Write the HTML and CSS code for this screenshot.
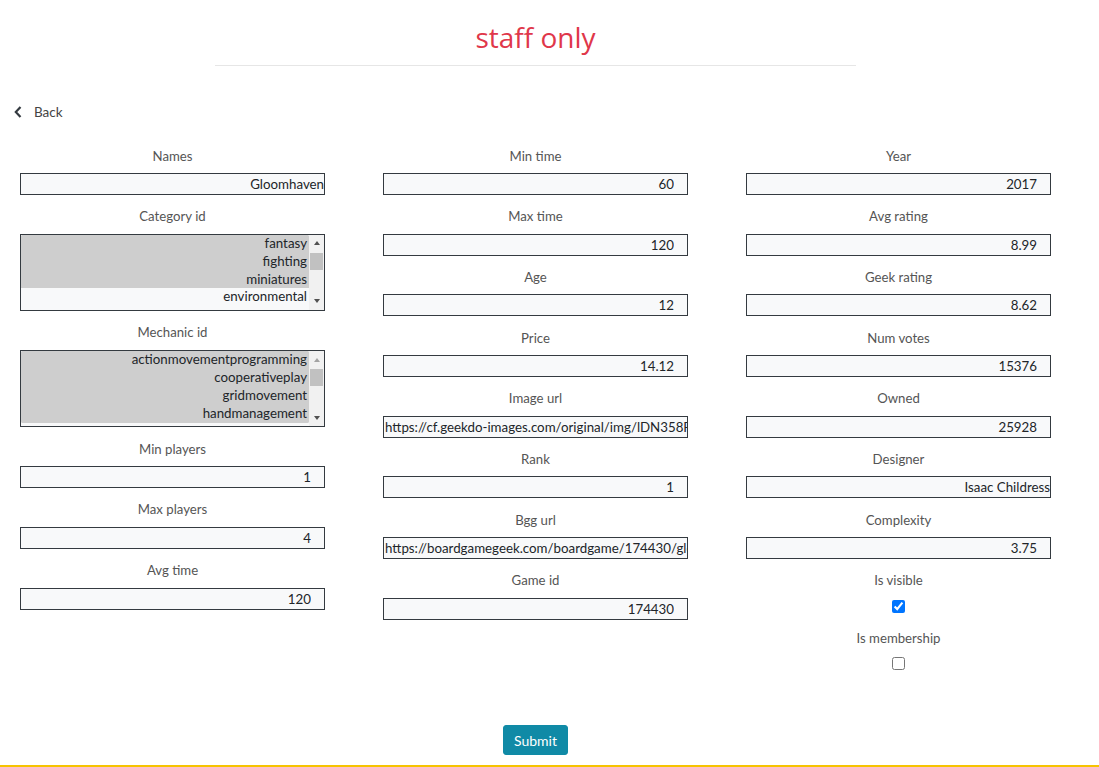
FILE: index.html
```html
<!DOCTYPE html>
<html lang="en">
<head>
<meta charset="utf-8">
<title>staff only</title>
<link rel="stylesheet" href="styles.css">
</head>
<body>
<div class="page">
  <header class="header">
    <h1 class="title">staff only</h1>
    <hr class="rule">
  </header>
  <a class="back" href="#">
    <svg class="chev" width="8" height="12" viewBox="0 0 8 12"><path d="M6.5 1 L1.8 6 L6.5 11" fill="none" stroke="#343a40" stroke-width="2.2"/></svg>
    <span>Back</span>
  </a>
  <form class="form">
    <div class="grid">
      <div class="col">
        <div class="field"><label>Names</label><input class="inp" type="text" value="Gloomhaven"></div>
        <div class="field sel"><label>Category id</label>
          <div class="listbox">
            <select class="list" multiple size="4">
              <option selected>fantasy</option>
              <option selected>fighting</option>
              <option selected>miniatures</option>
              <option>environmental</option>
              <option>economic</option>
              <option>medieval</option>
              <option>adventure</option>
              <option>exploration</option>
              <option>sciencefiction</option>
              <option>cardgame</option>
              <option>horror</option>
            </select>
            <div class="sbar">
              <div class="sbtn"><span class="tri up"></span></div>
              <div class="strack"><div class="sthumb"></div></div>
              <div class="sbtn"><span class="tri down"></span></div>
            </div>
          </div>
        </div>
        <div class="field sel"><label>Mechanic id</label>
          <div class="listbox">
            <select class="list" multiple size="4">
              <option selected>actionmovementprogramming</option>
              <option selected>cooperativeplay</option>
              <option selected>gridmovement</option>
              <option selected>handmanagement</option>
              <option selected>modularboard</option>
              <option selected>roleplaying</option>
              <option selected>simultaneousactionselection</option>
              <option selected>storytelling</option>
              <option selected>variableplayerpowers</option>
              <option>dicerolling</option>
              <option>setcollection</option>
            </select>
            <div class="sbar">
              <div class="sbtn"><span class="tri up off"></span></div>
              <div class="strack"><div class="sthumb"></div></div>
              <div class="sbtn"><span class="tri down"></span></div>
            </div>
          </div>
        </div>
        <div class="field"><label>Min players</label><input class="inp num" type="text" value="1"></div>
        <div class="field"><label>Max players</label><input class="inp num" type="text" value="4"></div>
        <div class="field"><label>Avg time</label><input class="inp num" type="text" value="120"></div>
      </div>
      <div class="col">
        <div class="field"><label>Min time</label><input class="inp num" type="text" value="60"></div>
        <div class="field"><label>Max time</label><input class="inp num" type="text" value="120"></div>
        <div class="field"><label>Age</label><input class="inp num" type="text" value="12"></div>
        <div class="field"><label>Price</label><input class="inp num" type="text" value="14.12"></div>
        <div class="field"><label>Image url</label><input class="inp" type="text" value="https://cf.geekdo-images.com/original/img/lDN358RgcYvQfYYN6Oy2TXpifyM=/0x0/pic2437871.jpg"></div>
        <div class="field"><label>Rank</label><input class="inp num" type="text" value="1"></div>
        <div class="field"><label>Bgg url</label><input class="inp" type="text" value="https://boardgamegeek.com/boardgame/174430/gloomhaven"></div>
        <div class="field"><label>Game id</label><input class="inp num" type="text" value="174430"></div>
      </div>
      <div class="col">
        <div class="field"><label>Year</label><input class="inp num" type="text" value="2017"></div>
        <div class="field"><label>Avg rating</label><input class="inp num" type="text" value="8.99"></div>
        <div class="field"><label>Geek rating</label><input class="inp num" type="text" value="8.62"></div>
        <div class="field"><label>Num votes</label><input class="inp num" type="text" value="15376"></div>
        <div class="field"><label>Owned</label><input class="inp num" type="text" value="25928"></div>
        <div class="field"><label>Designer</label><input class="inp" type="text" value="Isaac Childress"></div>
        <div class="field"><label>Complexity</label><input class="inp num" type="text" value="3.75"></div>
        <div class="field check"><label>Is visible</label><input class="cb" type="checkbox" checked></div>
        <div class="field check"><label>Is membership</label><input class="cb" type="checkbox"></div>
      </div>
    </div>
    <div class="actions"><button class="submit" type="button">Submit</button></div>
  </form>
</div>
<footer class="footer"></footer>
</body>
</html>
```

FILE: styles.css
```css
html, body {
  margin: 0;
  padding: 0;
  background: #fff;
}
body {
  font-family: Lato, "Open Sans", sans-serif;
  font-size: 13px;
  color: #212529;
}
.page {
  width: 1031px;
  margin-left: 20px;
}
.header {
  padding-top: 20px;
  display: flex;
  flex-direction: column;
  align-items: center;
}
.title {
  margin: 0;
  font-family: "Open Sans", sans-serif;
  font-weight: 500;
  font-size: 28px;
  line-height: 34px;
  color: #e0374a;
}
.rule {
  width: 641px;
  margin: 11px 0 0;
  border: 0;
  border-top: 1px solid #e6e6e6;
}
.back {
  display: flex;
  align-items: center;
  margin: 35px 0 0 -6px;
  height: 21px;
  color: #444;
  text-decoration: none;
  font-size: 13.5px;
}
.chev {
  margin-right: 12px;
}
.form {
  margin-top: 23.5px;
}
.grid {
  display: grid;
  grid-template-columns: 305px 305px 305px;
  column-gap: 58px;
  align-items: start;
}
.field {
  display: flex;
  flex-direction: column;
  align-items: center;
  margin-bottom: 11.2px;
}
.field label {
  display: block;
  height: 21px;
  line-height: 21px;
  margin-bottom: 6.5px;
  color: #555;
  font-size: 13.2px;
}
.inp {
  box-sizing: border-box;
  width: 305px;
  height: 22px;
  margin: 0;
  padding: 0 0 0 1px;
  border: 1px solid #343a40;
  background: #f8f9fa;
  font-family: Lato, "Open Sans", sans-serif;
  font-size: 13.3px;
  color: #212529;
  text-align: right;
  outline: none;
}
.inp.num {
  padding-right: 13px;
}
.sel label {
  margin-bottom: 6.8px;
}
.sel {
  margin-bottom: 11.5px;
}
.listbox {
  box-sizing: border-box;
  width: 305px;
  height: 77px;
  display: flex;
  align-items: flex-start;
  border: 1px solid #343a40;
  background: #f8f9fa;
}
.list {
  flex: 1;
  min-width: 0;
  height: 72px;
  margin: 0;
  padding: 0;
  border: 0;
  background: #f8f9fa;
  font-family: Lato, "Open Sans", sans-serif;
  font-size: 13.3px;
  color: #212529;
  outline: none;
  overflow: hidden;
  scrollbar-width: none;
}
.list option {
  text-align: right;
  padding: 0 2px 0 2px;
  line-height: 17.8px;
  height: 17.8px;
}
.list option:checked {
  background: #cecece linear-gradient(#cecece, #cecece);
  color: #212529;
}
.sbar {
  width: 15px;
  height: 75px;
  display: flex;
  flex-direction: column;
  background: #f1f1f1;
}
.sbtn {
  height: 17px;
  display: flex;
  align-items: center;
  justify-content: center;
}
.strack {
  flex: 1;
  padding-top: 1px;
}
.sthumb {
  height: 17px;
  margin: 0 1px 0 1px;
  background: #c1c1c1;
}
.tri {
  width: 0;
  height: 0;
  border-left: 3.5px solid transparent;
  border-right: 3.5px solid transparent;
}
.tri.up {
  border-bottom: 4px solid #505050;
}
.tri.down {
  border-top: 4px solid #505050;
}
.tri.up.off {
  border-bottom-color: #a3a3a3;
}
.check label {
  margin-bottom: 8.5px;
}
.cb {
  width: 13px;
  height: 13px;
  margin: 0;
}
.check {
  margin-bottom: 15px;
}
.actions {
  display: flex;
  justify-content: center;
  margin-top: 40px;
}
.submit {
  height: 30px;
  padding: 0 10px;
  border: 1px solid #0f8aa6;
  border-radius: 3px;
  background: #108aa6;
  color: #fff;
  font-family: Lato, "Open Sans", sans-serif;
  font-size: 14px;
}
.footer {
  margin-top: 9.5px;
  height: 40px;
  border-top: 2px solid #f6c300;
}
```
